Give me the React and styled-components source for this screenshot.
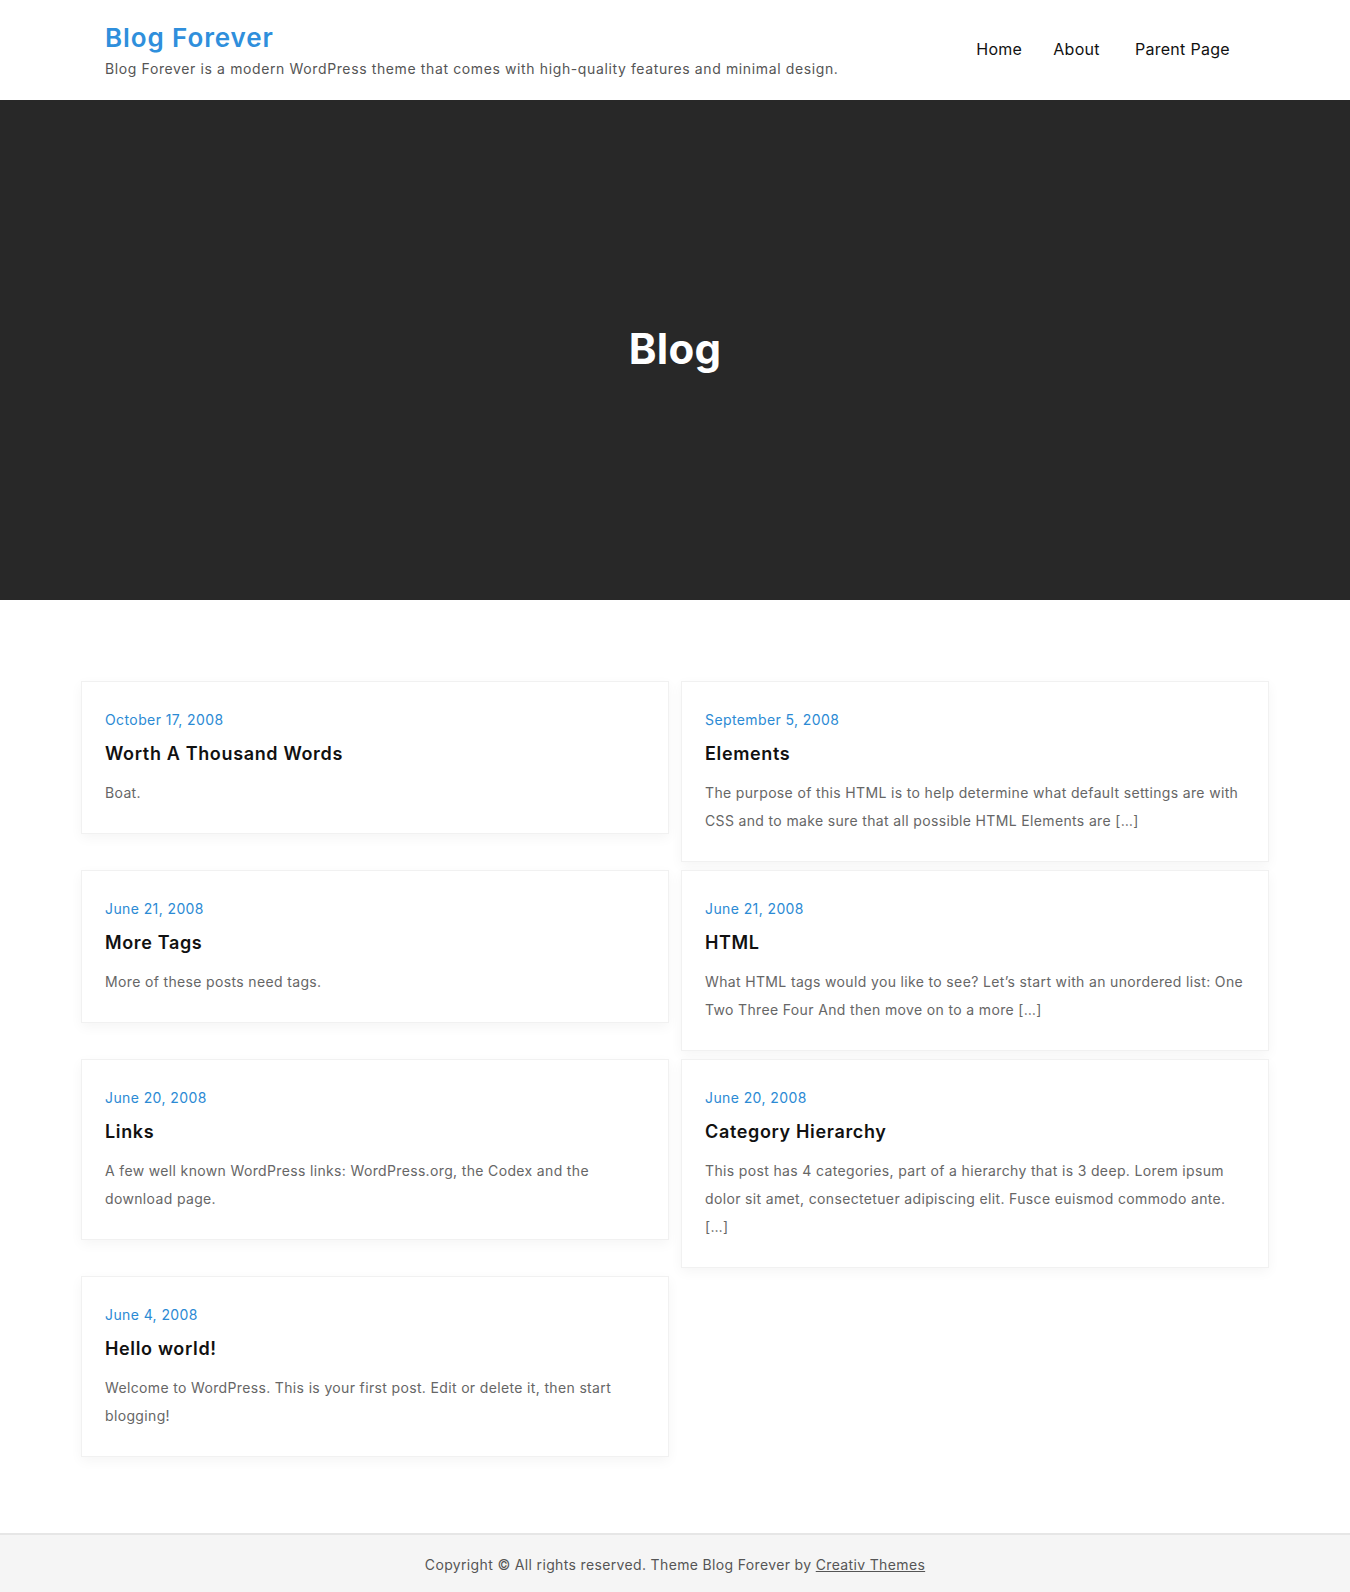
import React from 'react';
import styled, { createGlobalStyle } from 'styled-components';

const GlobalStyle = createGlobalStyle`
  * { box-sizing: border-box; }
  body {
    margin: 0;
    background: #fff;
    font-family: Inter, "DejaVu Sans", sans-serif;
    color: #333;
  }
`;

const Header = styled.header`
  height: 100px;
  background: #fff;
`;

const HeaderInner = styled.div`
  width: 1140px;
  margin: 0 auto;
  height: 100%;
  display: flex;
  align-items: flex-start;
  justify-content: space-between;
`;

const Branding = styled.div`
  display: flex;
  flex-direction: column;
  padding-top: 21px;
`;

const SiteTitle = styled.a`
  font-size: 26px;
  line-height: 34px;
  font-weight: 600;
  color: #2f8fdc;
  text-decoration: none;
  letter-spacing: 0.9px;
`;

const Tagline = styled.p`
  margin: 2px 0 0;
  font-size: 14px;
  line-height: 24px;
  color: #555;
  letter-spacing: 0.62px;
`;

const Nav = styled.nav`
  display: flex;
  align-items: center;
  gap: 31px;
  padding-top: 38px;
  padding-right: 15px;
`;

const NavLink = styled.a`
  font-size: 16px;
  line-height: 22px;
  color: #111;
  text-decoration: none;
  letter-spacing: 0.3px;
  margin-left: ${p => (p.$extra ? '4px' : '0')};
`;

const Hero = styled.section`
  height: 500px;
  background: #282828;
  display: flex;
  align-items: center;
  justify-content: center;
`;

const HeroTitle = styled.h1`
  margin: 0 0 4px;
  font-size: 42px;
  font-weight: 700;
  color: #fff;
  letter-spacing: 0.3px;
`;

const Main = styled.main`
  padding: 81px 0 76px;
`;

const Grid = styled.div`
  width: 1188px;
  margin: 0 auto;
  display: grid;
  grid-template-columns: 1fr 1fr;
  column-gap: 12px;
  row-gap: 8px;
  align-items: start;
`;

const Card = styled.article`
  background: #fff;
  border: 1px solid #f1f1f1;
  box-shadow: 0 4px 12px rgba(0, 0, 0, 0.045);
  padding: 28px 23px 26px;
`;

const PostDate = styled.a`
  display: block;
  font-size: 14px;
  line-height: 20px;
  color: #2b8ad4;
  text-decoration: none;
  letter-spacing: 0.4px;
`;

const PostTitle = styled.h2`
  margin: 11px 0 0;
  font-size: 18px;
  line-height: 26px;
  font-weight: 600;
  color: #111;
  letter-spacing: 0.65px;
`;

const Excerpt = styled.p`
  margin: 12px 0 0;
  font-size: 14px;
  line-height: 28px;
  color: #666;
  letter-spacing: 0.35px;
`;

const Footer = styled.footer`
  height: 60px;
  background: #f5f5f5;
  border-top: 2px solid #e6e6e6;
  display: flex;
  align-items: center;
  justify-content: center;
  font-size: 14px;
  color: #555;
  letter-spacing: 0.35px;
`;

const FooterLink = styled.a`
  color: #555;
  text-decoration: underline;
`;

const posts = [
  {
    date: 'October 17, 2008',
    title: 'Worth A Thousand Words',
    excerpt: 'Boat.'
  },
  {
    date: 'September 5, 2008',
    title: 'Elements',
    excerpt: 'The purpose of this HTML is to help determine what default settings are with CSS and to make sure that all possible HTML Elements are […]'
  },
  {
    date: 'June 21, 2008',
    title: 'More Tags',
    excerpt: 'More of these posts need tags.'
  },
  {
    date: 'June 21, 2008',
    title: 'HTML',
    excerpt: 'What HTML tags would you like to see? Let’s start with an unordered list: One Two Three Four And then move on to a more […]'
  },
  {
    date: 'June 20, 2008',
    title: 'Links',
    excerpt: 'A few well known WordPress links: WordPress.org, the Codex and the download page.'
  },
  {
    date: 'June 20, 2008',
    title: 'Category Hierarchy',
    excerpt: 'This post has 4 categories, part of a hierarchy that is 3 deep. Lorem ipsum dolor sit amet, consectetuer adipiscing elit. Fusce euismod commodo ante. […]'
  },
  {
    date: 'June 4, 2008',
    title: 'Hello world!',
    excerpt: 'Welcome to WordPress. This is your first post. Edit or delete it, then start blogging!'
  }
];

const App = () => (
  <>
    <GlobalStyle />
    <Header>
      <HeaderInner>
        <Branding>
          <SiteTitle href="#">Blog Forever</SiteTitle>
          <Tagline>Blog Forever is a modern WordPress theme that comes with high-quality features and minimal design.</Tagline>
        </Branding>
        <Nav>
          <NavLink href="#">Home</NavLink>
          <NavLink href="#">About</NavLink>
          <NavLink href="#" $extra>Parent Page</NavLink>
        </Nav>
      </HeaderInner>
    </Header>

    <Hero>
      <HeroTitle>Blog</HeroTitle>
    </Hero>

    <Main>
      <Grid>
        {posts.map((post, i) => (
          <Card key={i}>
            <PostDate href="#">{post.date}</PostDate>
            <PostTitle>{post.title}</PostTitle>
            <Excerpt>{post.excerpt}</Excerpt>
          </Card>
        ))}
      </Grid>
    </Main>

    <Footer>
      <span>
        Copyright © All rights reserved. Theme Blog Forever by <FooterLink href="#">Creativ Themes</FooterLink>
      </span>
    </Footer>
  </>
);

export default App;
